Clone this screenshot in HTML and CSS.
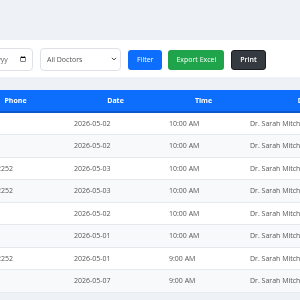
FILE: index.html
```html
<!DOCTYPE html>
<html lang="en">
<head>
    <meta charset="UTF-8">
    <meta name="viewport" content="width=device-width, initial-scale=1.0">
    <title>Appointments</title>
    <link rel="stylesheet" href="styles.css">
</head>
<body>
    <div class="filter-card">
        <div class="filters">
            <input type="date" class="date-input">
            <span class="select-wrap">
                <select class="doctor-select">
                    <option>All Doctors</option>
                    <option>Dr. Sarah Mitchell</option>
                </select>
                <svg class="chevron" viewBox="0 0 10 10" width="6" height="6">
                    <path d="M2 3.5 L5 6.5 L8 3.5" fill="none" stroke="#333" stroke-width="1.6" stroke-linecap="round" stroke-linejoin="round"/>
                </svg>
            </span>
            <button class="btn btn-primary">Filter</button>
            <button class="btn btn-success">Export Excel</button>
            <button class="btn btn-dark">Print</button>
        </div>
    </div>

    <div class="table-card">
        <table class="appointments">
            <thead>
                <tr>
                    <th class="col-phone">Phone</th>
                    <th class="col-date">Date</th>
                    <th class="col-time">Time</th>
                    <th class="col-doctor">Doctor</th>
                </tr>
            </thead>
            <tbody>
                <tr><td>—</td><td>2026-05-02</td><td>10:00 AM</td><td>Dr. Sarah Mitchell</td></tr>
                <tr><td>—</td><td>2026-05-02</td><td>10:00 AM</td><td>Dr. Sarah Mitchell</td></tr>
                <tr><td>08123452252</td><td>2026-05-03</td><td>10:00 AM</td><td>Dr. Sarah Mitchell</td></tr>
                <tr><td>08123452252</td><td>2026-05-03</td><td>10:00 AM</td><td>Dr. Sarah Mitchell</td></tr>
                <tr><td>—</td><td>2026-05-02</td><td>10:00 AM</td><td>Dr. Sarah Mitchell</td></tr>
                <tr><td>—</td><td>2026-05-01</td><td>10:00 AM</td><td>Dr. Sarah Mitchell</td></tr>
                <tr><td>08123452252</td><td>2026-05-01</td><td>9:00 AM</td><td>Dr. Sarah Mitchell</td></tr>
                <tr><td>—</td><td>2026-05-07</td><td>9:00 AM</td><td>Dr. Sarah Mitchell</td></tr>
            </tbody>
        </table>
    </div>
</body>
</html>
```

FILE: styles.css
```css
body {
    font-family: "Open Sans", "Noto Sans", sans-serif;
    background-color: #eef1f5;
    margin: 0;
    padding: 40px 0 0;
    overflow: hidden;
    color: #555;
}
.filter-card {
    background-color: #ffffff;
    padding: 8px 0 6px;
    margin-bottom: 13px;
    will-change: transform;
}
.filters {
    display: flex;
    align-items: center;
    gap: 7px;
    margin-left: -44px;
}
.date-input {
    width: 77px;
    height: 23px;
    box-sizing: border-box;
    border: 1px solid #dee2e6;
    border-radius: 4px;
    padding: 0 6px 0 5px;
    font-family: inherit;
    font-size: 7px;
    color: #666;
    background: #fff;
}
.date-input::-webkit-calendar-picker-indicator {
    width: 6px;
    height: 7px;
    padding: 0;
    margin: 0;
}
.select-wrap {
    position: relative;
    display: inline-block;
}
.doctor-select {
    appearance: none;
    -webkit-appearance: none;
    width: 81px;
    height: 23px;
    box-sizing: border-box;
    border: 1px solid #dee2e6;
    border-radius: 4px;
    padding: 0 6px;
    font-family: inherit;
    font-size: 7px;
    color: #555;
    background: #fff;
    display: block;
}
.chevron {
    position: absolute;
    right: 4px;
    top: 8px;
}
.btn {
    height: 20px;
    padding: 0 8px;
    border: 1px solid transparent;
    border-radius: 3px;
    font-family: inherit;
    font-size: 7px;
    color: #fff;
    cursor: pointer;
}
.btn-primary {
    background-color: #0d6efd;
    margin-right: -1px;
}
.btn-success {
    background-color: #1fa44c;
    padding: 0 7px;
}
.btn-dark {
    background-color: #343a40;
    border-color: #1a1d20;
    font-weight: 600;
}
.table-card {
    background-color: #ffffff;
    margin-left: -37px;
    will-change: transform;
}
.appointments {
    border-collapse: collapse;
    table-layout: fixed;
    width: 412px;
    font-size: 7px;
}
.appointments th,
.appointments td {
    box-sizing: border-box;
    padding: 0 6px;
}
.appointments th {
    background-color: #0d6efd;
    color: #fff;
    font-weight: 700;
    height: 22px;
    text-align: center;
    border-bottom: 2px solid #0a58ca;
}
.appointments td {
    height: 22.5px;
    text-align: left;
    color: #555;
    border-bottom: 1px solid #e6e9ed;
    white-space: nowrap;
    overflow: hidden;
}
.appointments tbody tr:nth-child(even) td {
    background-color: #f7f9fb;
}
.col-phone { width: 105px; }
.col-date { width: 95px; }
.col-time { width: 81px; }
.col-doctor { width: 131px; }
```
